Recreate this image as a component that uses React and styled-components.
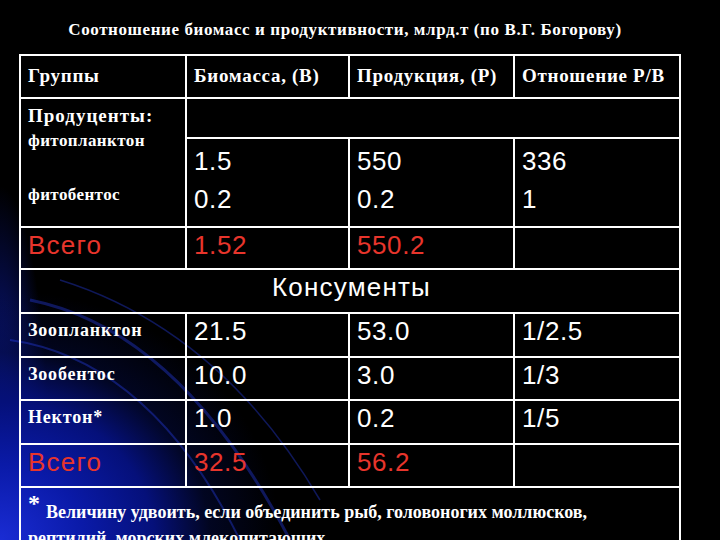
import React from "react";
import styled, { createGlobalStyle } from "styled-components";

const GlobalStyle = createGlobalStyle`
  html, body {
    margin: 0;
    padding: 0;
    background: #000;
  }
`;

const Slide = styled.div`
  position: relative;
  width: 720px;
  height: 540px;
  overflow: hidden;
  background:
    radial-gradient(ellipse 280px 250px at 0% 100%, #1a2cd4 0%, #0a1aa8 30%, #05107a 55%, rgba(3, 10, 60, 0.55) 75%, rgba(0, 0, 0, 0) 100%),
    radial-gradient(ellipse 50px 300px at 0% 90%, #0f22c8 0%, rgba(0, 0, 0, 0) 100%),
    #000;
`;

const Swirl = styled.svg`
  position: absolute;
  left: 0;
  top: 0;
  width: 720px;
  height: 540px;
  pointer-events: none;
`;

const Content = styled.div`
  position: relative;
  padding-top: 19px;
`;

const Title = styled.h1`
  margin: 0 0 14px 15px;
  width: 660px;
  height: 21px;
  text-align: center;
  font-family: "Liberation Serif", "Times New Roman", serif;
  font-weight: bold;
  font-size: 17px;
  line-height: 21px;
  letter-spacing: 0.6px;
  white-space: nowrap;
  color: #fff;
`;

const Table = styled.table`
  margin-left: 19px;
  width: 660px;
  table-layout: fixed;
  border-collapse: collapse;
  border: 2px solid #fff;
  color: #fff;
`;

const Row = styled.tr`
  height: ${(p) => p.$h}px;
`;

const Cell = styled.td`
  border: 2px solid #fff;
  padding: ${(p) => p.$pt || 3}px 4px 0 7px;
  vertical-align: top;
  background: transparent;
  white-space: nowrap;
  text-align: ${(p) => (p.$center ? "center" : "left")};
`;

const HeadCell = styled(Cell).attrs({ as: "th" })`
  font-family: "Liberation Serif", "Times New Roman", serif;
  font-weight: bold;
  font-size: 19px;
  line-height: 22px;
  letter-spacing: 0.7px;
  padding-top: 9px;
`;

const LabelCell = styled(Cell)`
  font-family: "Liberation Serif", "Times New Roman", serif;
  font-weight: bold;
  font-size: 18px;
  line-height: 20px;
  letter-spacing: 0.8px;
  padding-top: ${(p) => p.$pt || 6}px;
`;

const NumCell = styled(Cell)`
  font-family: "Liberation Sans", Arial, sans-serif;
  font-size: 26px;
  line-height: ${(p) => p.$lh || 29}px;
  letter-spacing: ${(p) => (p.$wide ? 1.2 : 0.6)}px;
  color: ${(p) => (p.$red ? "#e8352c" : "#fff")};
`;

const GroupTitle = styled.div`
  font-size: 19px;
  line-height: 22px;
  letter-spacing: 1px;
`;

const SubItem = styled.div`
  font-size: 17px;
  line-height: 20px;
  letter-spacing: 0.4px;
  margin-top: ${(p) => p.$mt}px;
`;

const Note = styled.td`
  border: 2px solid #fff;
  padding: 2px 6px 0 7px;
  vertical-align: top;
  font-family: "Liberation Serif", "Times New Roman", serif;
  font-weight: bold;
  font-size: 18px;
  line-height: 26px;
  white-space: nowrap;
`;

const Star = styled.span`
  font-size: 24px;
  vertical-align: 7px;
  margin-right: 6px;
`;

const rows = [
  { name: "Зоопланктон", b: "21.5", p: "53.0", r: "1/2.5", h: 44 },
  { name: "Зообентос", b: "10.0", p: "3.0", r: "1/3", h: 43 },
  { name: "Нектон*", b: "1.0", p: "0.2", r: "1/5", h: 44 },
];

export default function App() {
  return (
    <Slide>
      <GlobalStyle />
      <Swirl viewBox="0 0 720 540">
        <g fill="none" stroke="#2a46ff" strokeOpacity="0.35">
          <path d="M 30 300 Q 180 330 290 540" strokeWidth="3" />
          <path d="M 10 340 Q 150 360 240 540" strokeWidth="2" />
          <path d="M 60 280 Q 220 330 320 500" strokeWidth="1.5" />
        </g>
      </Swirl>
      <Content>
        <Title>Соотношение биомасс и продуктивности, млрд.т (по В.Г. Богорову)</Title>
        <Table>
          <colgroup>
            <col style={{ width: 166 }} />
            <col style={{ width: 163 }} />
            <col style={{ width: 165 }} />
            <col style={{ width: 166 }} />
          </colgroup>
          <tbody>
            <Row $h={43}>
              <HeadCell>Группы</HeadCell>
              <HeadCell>Биомасса, (В)</HeadCell>
              <HeadCell>Продукция, (Р)</HeadCell>
              <HeadCell>Отношение Р/В</HeadCell>
            </Row>
            <Row $h={40}>
              <LabelCell rowSpan={2} $pt={6}>
                <GroupTitle>Продуценты:</GroupTitle>
                <SubItem $mt={4}>фитопланктон</SubItem>
                <SubItem $mt={34}>фитобентос</SubItem>
              </LabelCell>
              <Cell colSpan={3} />
            </Row>
            <Row $h={89}>
              <NumCell $lh={38} $pt={3}>1.5<br />0.2</NumCell>
              <NumCell $lh={38} $pt={3}>550<br />0.2</NumCell>
              <NumCell $lh={38} $pt={3}>336<br />1</NumCell>
            </Row>
            <Row $h={42}>
              <NumCell $red $wide>Всего</NumCell>
              <NumCell $red>1.52</NumCell>
              <NumCell $red>550.2</NumCell>
              <NumCell />
            </Row>
            <Row $h={44}>
              <NumCell colSpan={4} $center $wide>Консументы</NumCell>
            </Row>
            {rows.map((r) => (
              <Row key={r.name} $h={r.h}>
                <LabelCell>{r.name}</LabelCell>
                <NumCell>{r.b}</NumCell>
                <NumCell>{r.p}</NumCell>
                <NumCell>{r.r}</NumCell>
              </Row>
            ))}
            <Row $h={43}>
              <NumCell $red $wide>Всего</NumCell>
              <NumCell $red>32.5</NumCell>
              <NumCell $red>56.2</NumCell>
              <NumCell />
            </Row>
            <Row $h={70}>
              <Note colSpan={4}>
                <Star>*</Star>Величину удвоить, если объединить рыб, головоногих моллюсков,
                <br />
                рептилий, морских млекопитающих
              </Note>
            </Row>
          </tbody>
        </Table>
      </Content>
    </Slide>
  );
}
